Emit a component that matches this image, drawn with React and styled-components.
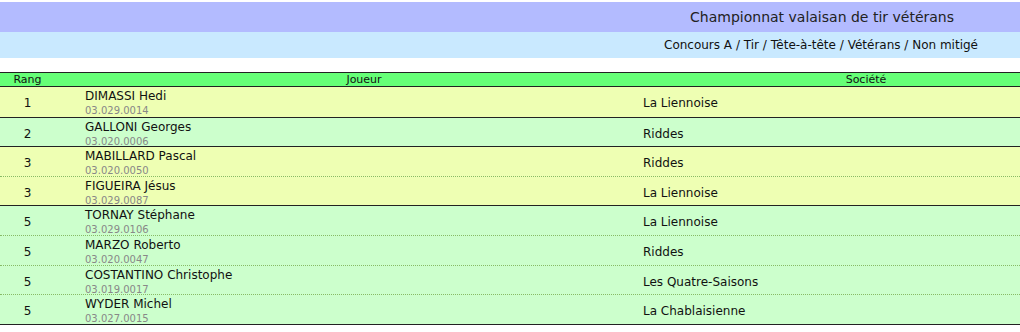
import React from "react";
import styled, { createGlobalStyle } from "styled-components";

const GlobalStyle = createGlobalStyle`
	body {
		margin: 0;
		padding-top: 2px;
		background: #ffffff;
		font-family: "DejaVu Sans", Verdana, sans-serif;
		color: #111111;
	}
`;

const groups = [
	{
		rank: 1,
		players: [{ name: "DIMASSI Hedi", license: "03.029.0014", club: "La Liennoise" }],
	},
	{
		rank: 2,
		players: [{ name: "GALLONI Georges", license: "03.020.0006", club: "Riddes" }],
	},
	{
		rank: 3,
		players: [
			{ name: "MABILLARD Pascal", license: "03.020.0050", club: "Riddes" },
			{ name: "FIGUEIRA Jésus", license: "03.029.0087", club: "La Liennoise" },
		],
	},
	{
		rank: 5,
		players: [
			{ name: "TORNAY Stéphane", license: "03.029.0106", club: "La Liennoise" },
			{ name: "MARZO Roberto", license: "03.020.0047", club: "Riddes" },
			{ name: "COSTANTINO Christophe", license: "03.019.0017", club: "Les Quatre-Saisons" },
			{ name: "WYDER Michel", license: "03.027.0015", club: "La Chablaisienne" },
		],
	},
];

const App = () => {
	return (
		<>
			<GlobalStyle />
			<TitleBar>Championnat valaisan de tir vétérans</TitleBar>
			<PathBar>Concours A / Tir / Tête-à-tête / Vétérans / Non mitigé</PathBar>
			<Ranking>
				<HeadRow>
					<HeadCell>Rang</HeadCell>
					<HeadCell>Joueur</HeadCell>
					<HeadCell className='club'>Société</HeadCell>
				</HeadRow>
				{groups.map((group, g) =>
					group.players.map((player, i) => (
						<Row key={player.license} $odd={g % 2 === 0} $first={i === 0}>
							<RankCell>{group.rank}</RankCell>
							<PlayerCell>
								<span className='name'>{player.name}</span>
								<span className='license'>{player.license}</span>
							</PlayerCell>
							<ClubCell>{player.club}</ClubCell>
						</Row>
					))
				)}
			</Ranking>
		</>
	);
};

const TitleBar = styled.div`
	background: #b3bbff;
	height: 30px;
	display: flex;
	align-items: center;
	justify-content: flex-end;
	padding-right: 66px;
	font-size: 14px;
	color: #222222;
`;

const PathBar = styled.div`
	background: #c9e9ff;
	height: 26px;
	display: flex;
	align-items: center;
	justify-content: flex-end;
	padding-right: 42px;
	margin-bottom: 14px;
	font-size: 12px;
	color: #111111;
`;

const Ranking = styled.div`
	border-bottom: 1px solid #222222;
`;

const HeadRow = styled.div`
	display: grid;
	grid-template-columns: 55px 618px 1fr;
	background: #66ff77;
	border-top: 1px solid #222222;
	border-bottom: 1px solid #222222;
	height: 13px;
	font-size: 11px;
	line-height: 13px;
	.club {
		padding-left: 39px;
	}
`;

const HeadCell = styled.div`
	text-align: center;
`;

const Row = styled.div`
	box-sizing: border-box;
	display: grid;
	grid-template-columns: 55px 588px 1fr;
	align-items: center;
	height: 29.6px;
	padding-top: 2px;
	background: ${(p) => (p.$odd ? "#eeffb3" : "#ccffcc")};
	border-top: 1px ${(p) => (p.$first ? "solid #222222" : "dotted #88bb66")};
	&:nth-child(2) {
		border-top: none;
	}
`;

const RankCell = styled.div`
	text-align: center;
	font-size: 12px;
`;

const PlayerCell = styled.div`
	display: flex;
	flex-direction: column;
	padding-left: 30px;
	.name {
		font-size: 12px;
		line-height: 15px;
	}
	.license {
		font-size: 10px;
		line-height: 13px;
		color: #888888;
	}
`;

const ClubCell = styled.div`
	font-size: 12px;
`;

export default App;
